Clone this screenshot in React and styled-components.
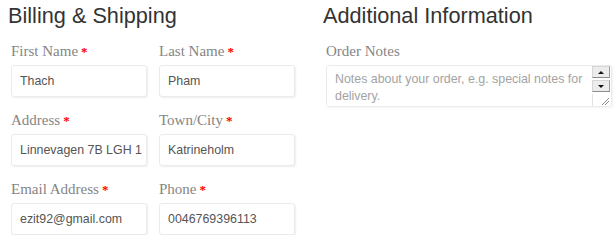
import React from "react";
import styled, { createGlobalStyle } from "styled-components";

const GlobalStyle = createGlobalStyle`
  body {
    margin: 0;
    background: #ffffff;
  }
`;

const billingFields = [
  { label: "First Name", value: "Thach" },
  { label: "Last Name", value: "Pham" },
  { label: "Address", value: "Linnevagen 7B LGH 1" },
  { label: "Town/City", value: "Katrineholm" },
  { label: "Email Address", value: "ezit92@gmail.com" },
  { label: "Phone", value: "0046769396113" },
];

function App() {
  return (
    <>
      <GlobalStyle />
      <Page>
        <BillingColumn>
          <Heading>Billing &amp; Shipping</Heading>
          <FieldGrid>
            {billingFields.map((f) => (
              <Field key={f.label}>
                <Label>
                  {f.label}
                  <Required>*</Required>
                </Label>
                <Input defaultValue={f.value} />
              </Field>
            ))}
          </FieldGrid>
        </BillingColumn>
        <AdditionalColumn>
          <Heading>Additional Information</Heading>
          <NotesField>
            <Label>Order Notes</Label>
            <NotesBox>
              <Notes placeholder="Notes about your order, e.g. special notes for delivery." />
              <ScrollBar>
                <ScrollButton>
                  <Arrow $up />
                </ScrollButton>
                <ScrollButton>
                  <Arrow />
                </ScrollButton>
                <Track>
                  <svg width="8" height="8" viewBox="0 0 8 8">
                    <path d="M1 8 L8 1 M4 8 L8 4" stroke="#8a8a8a" strokeWidth="1" />
                  </svg>
                </Track>
              </ScrollBar>
            </NotesBox>
          </NotesField>
        </AdditionalColumn>
      </Page>
    </>
  );
}

const Page = styled.div`
  display: flex;
  align-items: flex-start;
  padding: 1px 0 0 8px;
`;

const BillingColumn = styled.div`
  display: flex;
  flex-direction: column;
  width: 300px;
`;

const AdditionalColumn = styled.div`
  display: flex;
  flex-direction: column;
  margin-left: 15px;
  width: 289px;
`;

const Heading = styled.h2`
  margin: 0;
  font-family: "Liberation Sans", Arial, sans-serif;
  font-weight: 400;
  font-size: 21.7px;
  line-height: 30px;
  color: #333333;
  white-space: nowrap;
`;

const FieldGrid = styled.div`
  display: grid;
  grid-template-columns: 136px 136px;
  column-gap: 12px;
  row-gap: 13px;
  margin-top: 10px;
  padding-left: 3px;
`;

const Field = styled.div`
  display: flex;
  flex-direction: column;
  gap: 4px;
`;

const NotesField = styled(Field)`
  margin-top: 10px;
  padding-left: 3px;
`;

const Label = styled.label`
  display: block;
  height: 20px;
  font-family: "Liberation Serif", Georgia, serif;
  font-size: 15px;
  line-height: 20px;
  color: #858585;
  white-space: nowrap;
`;

const Required = styled.span`
  margin-left: 3px;
  color: #ff0000;
  font-weight: 700;
  font-size: 13px;
  line-height: 10px;
`;

const Input = styled.input`
  box-sizing: border-box;
  width: 100%;
  height: 32px;
  margin: 0;
  padding: 0 3px 0 8px;
  border: 1px solid #ebebeb;
  border-radius: 3px;
  box-shadow: 1px 1px 2px rgba(0, 0, 0, 0.07);
  font-family: "Liberation Sans", Arial, sans-serif;
  font-size: 12.4px;
  color: #555555;
  background: #ffffff;
  outline: none;
`;

const NotesBox = styled.div`
  display: flex;
  box-sizing: border-box;
  width: 286px;
  height: 42px;
  border: 1px solid #ebebeb;
  border-radius: 3px;
  box-shadow: 1px 1px 2px rgba(0, 0, 0, 0.05);
  overflow: hidden;
`;

const Notes = styled.textarea`
  flex: 1;
  min-width: 0;
  margin: 0;
  padding: 5px 2px 0 8px;
  border: none;
  resize: none;
  overflow: hidden;
  outline: none;
  font-family: "Liberation Sans", Arial, sans-serif;
  font-size: 12.4px;
  line-height: 17px;
  color: #555555;

  &::placeholder {
    color: #a3a3a3;
    opacity: 1;
  }
`;

const ScrollBar = styled.div`
  display: flex;
  flex-direction: column;
  width: 18px;
  margin-right: 1px;
`;

const ScrollButton = styled.div`
  display: flex;
  align-items: center;
  justify-content: center;
  box-sizing: border-box;
  height: 12px;
  margin-bottom: 2px;
  background: #ececec;
  border: 1px solid #d6d6d6;
  border-right-color: #9a9a9a;
  border-bottom-color: #8c8c8c;
`;

const Arrow = styled.span`
  width: 0;
  height: 0;
  border-left: 3px solid transparent;
  border-right: 3px solid transparent;
  ${(p) =>
    p.$up ? "border-bottom: 3px solid #111;" : "border-top: 3px solid #111;"}
`;

const Track = styled.div`
  flex: 1;
  display: flex;
  align-items: flex-end;
  justify-content: flex-end;
  border-left: 1px solid #e2e2e2;
  padding: 0 1px 1px 0;
`;

export default App;
